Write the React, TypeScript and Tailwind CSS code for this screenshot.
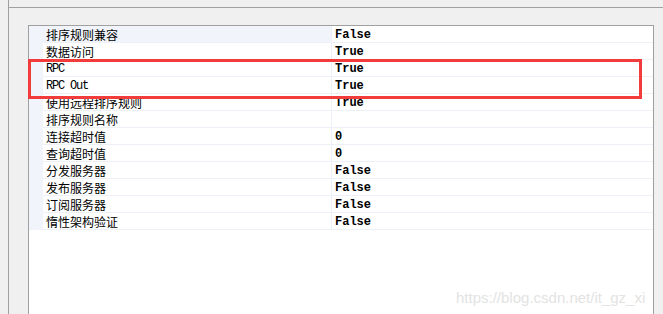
import React from 'react';

interface PropRow {
  name: string;
  value: string;
  ascii?: boolean;
}

const rows: PropRow[] = [
  { name: '排序规则兼容', value: 'False' },
  { name: '数据访问', value: 'True' },
  { name: 'RPC', value: 'True', ascii: true },
  { name: 'RPC Out', value: 'True', ascii: true },
  { name: '使用远程排序规则', value: 'True' },
  { name: '排序规则名称', value: '' },
  { name: '连接超时值', value: '0' },
  { name: '查询超时值', value: '0' },
  { name: '分发服务器', value: 'False' },
  { name: '发布服务器', value: 'False' },
  { name: '订阅服务器', value: 'False' },
  { name: '惰性架构验证', value: 'False' },
];

const PropertyGrid: React.FC = () => (
  <div className="relative flex-1 flex flex-col bg-white border border-b-0 border-[#a0a0a0] overflow-hidden">
    {rows.map((row, i) => (
      <div key={row.name} className="flex h-[17px] shrink-0">
        <div className="w-[14px] bg-[#f1f5fb]" />
        <div
          className={
            'w-[289px] pl-[3px] pt-[1px] flex items-center border-b border-r border-[#edf0f6] text-black ' +
            (i === 0 ? 'bg-[#f1f5fb]' : 'bg-white')
          }
        >
          {row.ascii ? (
            <span className="font-['Liberation_Mono',monospace] text-[12px] tracking-[-1.2px] leading-none">
              {row.name}
            </span>
          ) : (
            <span className="font-['Noto_Sans_CJK_SC','Liberation_Sans',sans-serif] text-[12px] leading-none">
              {row.name}
            </span>
          )}
        </div>
        <div className="flex-1 pl-[3px] pt-[1px] flex items-center border-b border-[#edf0f6]">
          <span className="font-['Liberation_Mono',monospace] font-bold text-[12px] leading-none text-black">
            {row.value}
          </span>
        </div>
      </div>
    ))}
    <span className="absolute left-[427px] top-[261px] font-['Liberation_Sans',sans-serif] text-[15px] text-[#e3e3e3] whitespace-nowrap">
      https://blog.csdn.net/it_gz_xi
    </span>
  </div>
);

export default function App() {
  return (
    <div className="relative w-[663px] h-[314px] bg-[#f0f0f0] flex overflow-hidden">
      <div className="w-[8px] shrink-0" />
      <div className="flex-1 flex flex-col border-l border-[#a0a0a0]">
        <div className="h-[8px] shrink-0 border-b border-[#a0a0a0]" />
        <div className="flex-1 flex flex-col pl-[19px] pt-[17px] pr-[9px]">
          <PropertyGrid />
        </div>
      </div>
      <div className="absolute left-[28px] top-[59px] w-[614px] h-[40px] border-[3px] border-[#f23b3b]" />
    </div>
  );
}
